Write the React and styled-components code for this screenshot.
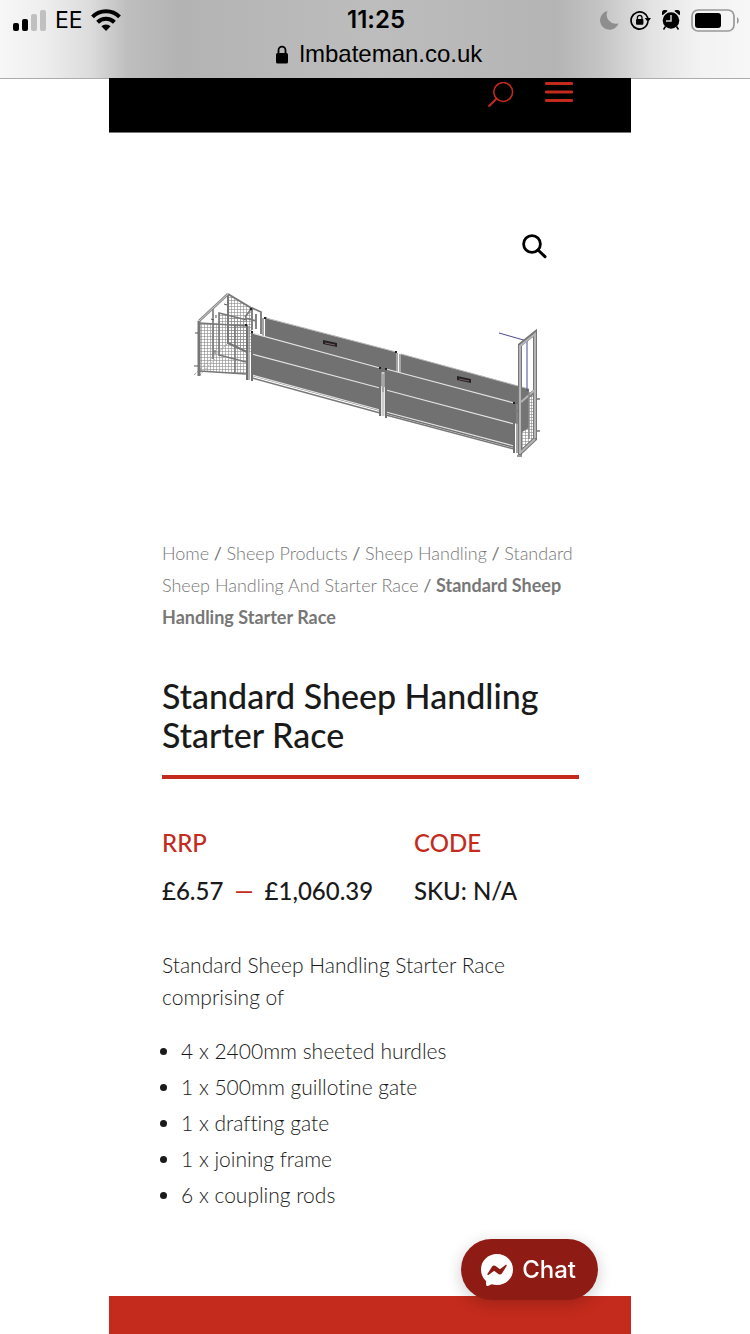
import styled, { createGlobalStyle } from "styled-components";

const parts = [
  "4 x 2400mm sheeted hurdles",
  "1 x 500mm guillotine gate",
  "1 x drafting gate",
  "1 x joining frame",
  "6 x coupling rods",
];

export default function App() {
  return (
    <>
      <GlobalStyle />
      <BrowserBar>
        <StatusRow>
          <StatusLeft>
            <SignalIcon />
            <Carrier>EE</Carrier>
            <WifiIcon />
          </StatusLeft>
          <Time>11:25</Time>
          <StatusRight>
            <MoonIcon />
            <RotationLockIcon />
            <AlarmIcon />
            <BatteryIcon />
          </StatusRight>
        </StatusRow>
        <AddressRow>
          <LockIcon />
          <span>lmbateman.co.uk</span>
        </AddressRow>
      </BrowserBar>
      <Page>
        <NavBar>
          <IconButton aria-label="Search">
            <NavSearchIcon />
          </IconButton>
          <IconButton aria-label="Menu">
            <MenuIcon />
          </IconButton>
        </NavBar>
        <Product>
          <Gallery>
            <ZoomButton aria-label="Zoom picture">
              <ZoomIcon />
            </ZoomButton>
            <RaceDrawing />
          </Gallery>
          <Breadcrumb aria-label="Breadcrumb">
            <Crumb href="#">Home</Crumb> / <Crumb href="#">Sheep Products</Crumb> /{" "}
            <Crumb href="#">Sheep Handling</Crumb> /{" "}
            <Crumb href="#">
              Standard
              <br />
              Sheep Handling And Starter Race
            </Crumb>{" "}
            /{" "}
            <strong>
              Standard Sheep
              <br />
              Handling Starter Race
            </strong>
          </Breadcrumb>
          <Title>Standard Sheep Handling Starter Race</Title>
          <Details>
            <div>
              <Label>RRP</Label>
              <Value>
                £6.57 <Dash>—</Dash> £1,060.39
              </Value>
            </div>
            <div>
              <Label>CODE</Label>
              <Value>SKU: N/A</Value>
            </div>
          </Details>
          <Description>
            Standard Sheep Handling Starter Race
            <br />
            comprising of
          </Description>
          <PartList>
            {parts.map((part) => (
              <li key={part}>{part}</li>
            ))}
          </PartList>
        </Product>
        <Footer />
      </Page>
      <ChatButton>
        <MessengerIcon />
        Chat
      </ChatButton>
    </>
  );
}

const SignalIcon = () => (
  <svg width="34" height="22" viewBox="0 0 34 22">
    <rect x="0" y="14" width="6" height="8" rx="2" />
    <rect x="9" y="10" width="6" height="12" rx="2" />
    <rect x="18" y="5" width="6" height="17" rx="2" fill="#c0c0c0" />
    <rect x="27" y="1" width="6" height="21" rx="2" fill="#c0c0c0" />
  </svg>
);

const WifiIcon = () => (
  <svg width="30" height="22" viewBox="0 0 30 22">
    <g fill="none" stroke="#000" strokeWidth="4">
      <path d="M1.500 7.800a19 19 0 0 1 27 0" />
      <path d="M6.600 13.200a12 12 0 0 1 16.800 0" />
    </g>
    <path d="M15 22l-4.600-4.700a6.600 6.600 0 0 1 9.200 0z" />
  </svg>
);

const MoonIcon = () => (
  <svg width="19" height="20" viewBox="0 0 19 20">
    <path
      d="M7.500 1A9.500 9.500 0 1 0 18.600 13.200 9 9 0 0 1 7.500 1z"
      fill="#8e8e8e"
    />
  </svg>
);

const RotationLockIcon = () => (
  <svg width="21" height="20" viewBox="0 0 21 20">
    <path
      d="M13.700 18.100A8.600 8.600 0 1 1 17.900 8"
      fill="none"
      stroke="#000"
      strokeWidth="1.700"
    />
    <path d="M17.900 11.500A8.600 8.600 0 0 1 13.200 18.200" fill="none" stroke="#000" strokeWidth="1.700" />
    <path d="M14.800 8h6.200l-3.100 4.200z" />
    <rect x="6" y="9" width="7.400" height="5.800" rx="1" />
    <path d="M7.400 9.500V7.600a2.300 2.300 0 0 1 4.600 0v1.900" fill="none" stroke="#000" strokeWidth="1.300" />
  </svg>
);

const AlarmIcon = () => (
  <svg width="18" height="20" viewBox="0 0 18 20">
    <circle cx="9" cy="10.500" r="8.300" />
    <path d="M.6 5.200A3 3 0 0 1 5.600 1zM17.400 5.200A3 3 0 0 0 12.400 1z" />
    <path d="M3.500 16.500l-2 3M14.500 16.500l2 3" stroke="#000" strokeWidth="1.500" />
    <path d="M9 5v6H4" fill="none" stroke="#d4d4d4" strokeWidth="1.500" />
  </svg>
);

const BatteryIcon = () => (
  <svg width="48" height="23" viewBox="0 0 48 23">
    <rect x="1" y="1" width="42" height="21" rx="6" fill="none" stroke="#989898" strokeWidth="1.700" />
    <rect x="4" y="4" width="26" height="15" rx="3" />
    <path d="M46 8c2.300 1.500 2.300 5.500 0 7z" fill="#989898" />
  </svg>
);

const LockIcon = () => (
  <svg width="12" height="19" viewBox="0 0 12 19">
    <rect y="8" width="12" height="10.500" rx="1.500" />
    <path d="M2.500 9V5.200a3.500 3.500 0 0 1 7 0V9" fill="none" stroke="#000" strokeWidth="1.800" />
  </svg>
);

const NavSearchIcon = () => (
  <svg width="26" height="26" viewBox="0 0 26 26" fill="none" stroke="#c42b1c">
    <circle cx="15.200" cy="10" r="9.400" strokeWidth="1.500" />
    <path d="M8.500 16.800L1.200 24" strokeWidth="2" strokeLinecap="round" />
  </svg>
);

const MenuIcon = () => (
  <svg width="28" height="20" viewBox="0 0 28 20">
    <path d="M1.300 1.500h25.400M1.300 10h25.400M1.300 18.500h25.400" stroke="#c42b1c" strokeWidth="2.800" strokeLinecap="round" />
  </svg>
);

const ZoomIcon = () => (
  <svg width="25" height="25" viewBox="0 0 25 25" fill="none" stroke="#000">
    <circle cx="10" cy="10" r="8.400" strokeWidth="2.800" />
    <path d="M16 16l7 6.600" strokeWidth="3" strokeLinecap="round" />
  </svg>
);

const MessengerIcon = () => (
  <svg width="32" height="32" viewBox="0 0 32 32">
    <path
      d="M16 0C7 0 0 6.600 0 15.500c0 4.700 1.900 8.700 5 11.500l.2 4c.1 1 .9 1.200 1.600.9l3.900-1.700c1.700.5 3.400.8 5.300.8 9 0 16-6.600 16-15.500S25 0 16 0z"
      fill="#fff"
    />
    <path
      d="M6.400 20l4.700-7.500c.8-1.200 2.300-1.500 3.500-.6l3.700 2.800c.4.300.8.300 1.200 0l5-3.800c.7-.5 1.500.3 1.100 1l-4.700 7.500c-.8 1.200-2.300 1.500-3.500.6l-3.700-2.800a1 1 0 0 0-1.200 0l-5 3.800c-.7.500-1.500-.3-1.100-1z"
      fill="#8f1c14"
    />
  </svg>
);

const RaceDrawing = () => (
  <svg width="100%" viewBox="162 280 417 190" role="img" aria-label="Sheep race">
    <defs>
      <pattern id="mesh" width="3" height="3" patternUnits="userSpaceOnUse">
        <path d="M0 .5h3M.5 0v3" stroke="#8a8a8a" strokeWidth=".6" />
      </pattern>
    </defs>

    {/* pen and drafting gate */}
    <path d="M228 294l24 14v45l-24-11z" fill="url(#mesh)" />
    <path d="M199 323l20 1v32l16 4v13l-36-2z" fill="url(#mesh)" />
    <path d="M235 360l12 3v12l-12-2z" fill="url(#mesh)" />
    <path d="M219 313l28 7v42l-28-7z" fill="url(#mesh)" />
    <path d="M194 375l34-32M199 376l16-17" stroke="#aaa" strokeWidth="1" strokeDasharray="3 1" />
    <g fill="none" stroke="#777" strokeWidth="2">
      <path d="M228 294l25 15M228 294v49l19 9" />
      <path d="M213 309v50M219 356v-43l28 7M219 355l27 7" strokeWidth="1.600" />
      <path d="M199 323l48 3M199 371l47 3M235 326v47" strokeWidth="1.500" />
      <path d="M199 321v55" strokeWidth="3" />
      <path d="M245 317l7-9 9 4v22M252 308v22M256 314v15M245 318l11 3" strokeWidth="1.800" />
    </g>
    <path d="M199 321l29-27" stroke="#888" strokeWidth="2.600" />
    <path d="M199 321l29-27" stroke="#ccc" strokeWidth="1" />
    <path d="M195 333h3M194 366h4M224 304l3 1M211 319l3 1M216 315v3M215 350v4" stroke="#555" strokeWidth="1" />

    {/* far side sheets */}
    <path d="M265 318l131 34v38l-131-34zM401 354l128 35v38l-128-33z" fill="#717171" />
    <path d="M266 318l130 34M401 354l128 35" stroke="#b5b5b5" strokeWidth="1" />
    <path d="M263 318v18M266 317v18M397 353v20M400 354v20" stroke="#777" strokeWidth="1.300" />
    <path d="M323 340l14 3v4l-14-3zM457 376l14 3v4l-14-3z" fill="#222" />
    <path d="M325 343l10 2M459 379l10 2" stroke="#8b6c6c" strokeWidth=".8" />

    {/* near side sheets */}
    <path d="M252 333l128 35v43l-128-35zM386 369l128 34v45l-128-34z" fill="#717171" />
    <g stroke="#e4e4e4" strokeWidth="1.200">
      <path d="M252 333l128 35M252 354l128 34M252 375l128 35" />
      <path d="M386 369l128 34M386 390l128 34M386 412l128 34" />
    </g>
    <path d="M252 378l128 35M386 415l128 34" stroke="#777" strokeWidth="1.500" />
    <path d="M383 372v44" stroke="#ccc" strokeWidth="3" />
    <g stroke="#707070" strokeWidth="2">
      <path d="M247 325v55M252 332v49M380 368v48M386 369v49M514 403v50" />
    </g>
    <path d="M249 326v54M383 374v18" stroke="#999" strokeWidth="1.500" />
    <path d="M245 325h2M251 332h2M264 318h2M379 368h2M385 369h2M513 403h2M395 352h2M250 309h2" stroke="#222" strokeWidth="2" />

    {/* guillotine gate */}
    <path d="M521 402l14-12v48l-14 16z" fill="url(#mesh)" />
    <path d="M522 390l7-1v39l-7 4z" fill="#747474" />
    <path d="M499 333l28 8v50" fill="none" stroke="#4b4896" strokeWidth="1" />
    <g fill="none" stroke="#777" strokeWidth="4">
      <path d="M520 455V345l15-12v106M520 403l15-12M519 454l17-16" />
    </g>
    <g fill="none" stroke="#b4b4b4" strokeWidth="2">
      <path d="M520 454V346l15-12v104M521 402l14-12M520 453l15-14" />
    </g>
    <path d="M517 404v49M529 392v47" stroke="#888" strokeWidth="1.500" />
    <path d="M536 399h4M537 431h3M517 456h5M514 411h5" stroke="#777" strokeWidth="1.500" />
  </svg>
);

const GlobalStyle = createGlobalStyle`
  body {
    margin: 0;
    background: #fff;
    color: #1a1a1a;
    font-family: Lato, sans-serif;
    font-variant-ligatures: none;
  }

  * {
    box-sizing: border-box;
  }

  svg {
    display: block;
    flex-shrink: 0;
  }
`;

const BrowserBar = styled.header`
  height: 78px;
  font-family: Inter, sans-serif;
  color: #000;
  background: linear-gradient(
    90deg,
    #f7f7f7 0,
    #eee 6%,
    #dcdcdc 12%,
    #bebebe 17%,
    #b4b3b3 24%,
    #bdbdbd 50%,
    #b4b4b4 74%,
    #c4c4c4 80%,
    #e3e3e3 87%,
    #f2f2f2 93%,
    #f7f7f7 100%
  );
  box-shadow: 0 1px 0 #acacac;
`;

const StatusRow = styled.div`
  display: grid;
  grid-template-columns: 1fr auto 1fr;
  align-items: center;
  height: 40px;
  padding: 0 11px 0 13px;
`;

const StatusLeft = styled.div`
  display: flex;
  align-items: center;
  gap: 8px;
`;

const StatusRight = styled.div`
  display: flex;
  align-items: center;
  justify-content: flex-end;
  gap: 11px;
`;

const Carrier = styled.span`
  font-size: 23px;
`;

const Time = styled.span`
  font-size: 24px;
  line-height: 28px;
  font-weight: 600;
`;

const AddressRow = styled.div`
  display: flex;
  align-items: center;
  justify-content: center;
  gap: 12px;
  height: 28px;
  padding-left: 8px;
  font: 24px "Liberation Sans", sans-serif;
`;

const Page = styled.main`
  margin: 0 119px 0 109px;
`;

const NavBar = styled.nav`
  display: flex;
  align-items: flex-start;
  justify-content: flex-end;
  gap: 31px;
  height: 55px;
  padding: 4px 58px 0 0;
  background: #000;
  border-bottom: 1px solid #777;
`;

const IconButton = styled.button`
  padding: 0;
  border: 0;
  background: none;
  cursor: pointer;
`;

const Product = styled.section`
  padding: 0 52px 0 53px;
`;

const Gallery = styled.div`
  position: relative;
  padding: 147px 0 67px;
`;

const ZoomButton = styled(IconButton)`
  position: absolute;
  top: 101px;
  right: 32px;
`;

const Breadcrumb = styled.nav`
  font-size: 18px;
  line-height: 32px;
  color: #777;
  white-space: nowrap;

  strong {
    font-weight: 700;
  }
`;

const Crumb = styled.a`
  color: #777;
  font-weight: 300;
  text-decoration: none;
`;

const Title = styled.h1`
  margin: 43px 0 0;
  padding-bottom: 21px;
  border-bottom: 4px solid #c42b1c;
  font-size: 34px;
  line-height: 39px;
  font-weight: 500;
`;

const Details = styled.div`
  display: grid;
  grid-template-columns: 252px 1fr;
  margin-top: 48px;
  white-space: nowrap;
`;

const Label = styled.h2`
  margin: 0 0 16px;
  color: #c42b1c;
  font-size: 24px;
  line-height: 32px;
  font-weight: 500;
`;

const Value = styled.p`
  margin: 0;
  font-size: 24px;
  line-height: 32px;
  font-weight: 500;
`;

const Dash = styled.span`
  margin: 0 5px;
  color: #c42b1c;
`;

const Description = styled.p`
  margin: 42px 0 0;
  font-size: 21px;
  line-height: 32px;
  font-weight: 300;
`;

const PartList = styled.ul`
  margin: 20px 0 0;
  padding: 0 0 83px 19px;
  font-size: 21px;
  line-height: 36px;
  font-weight: 300;
`;

const Footer = styled.footer`
  height: 38px;
  background: #c42b1c;
`;

const ChatButton = styled.button`
  position: fixed;
  right: 152px;
  bottom: 34px;
  display: flex;
  align-items: center;
  gap: 9px;
  height: 61px;
  padding: 0 22px 0 20px;
  border: 0;
  border-radius: 31px;
  background: #8f1c14;
  box-shadow: 0 4px 16px rgba(0, 0, 0, 0.2);
  color: #fff;
  font: 500 24px Inter, sans-serif;
  cursor: pointer;
`;
